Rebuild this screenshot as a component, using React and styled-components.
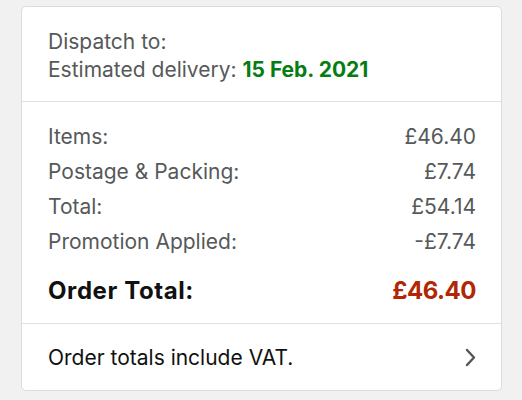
import React from "react"
import styled, { createGlobalStyle } from "styled-components"

const Global = createGlobalStyle`
  html, body {
    margin: 0;
    background: #f1f1f1;
  }
  body {
    font-family: Inter, Roboto, "Liberation Sans", sans-serif;
    -webkit-font-smoothing: antialiased;
  }
`

const Page = styled.div`
  padding: 6px 20px 9px 21px;
`

const Card = styled.div`
  background: #fff;
  border: 1px solid #dcdcdc;
  border-radius: 5px;
  overflow: hidden;
`

const Section = styled.div`
  padding: ${(p) => p.$pad};
  & + & {
    border-top: 1px solid #e0e0e0;
  }
`

const Line = styled.div`
  font-size: 21px;
  line-height: 28px;
  color: #565959;
`

const Date = styled.span`
  color: #067d12;
  font-weight: 700;
`

const Row = styled.div`
  display: flex;
  justify-content: space-between;
  align-items: center;
  font-size: ${(p) => (p.$big ? "24px" : "21px")};
  font-weight: ${(p) => (p.$big ? 700 : 400)};
  line-height: 35px;
  color: ${(p) => (p.$big ? "#111" : "#565959")};
  margin-top: ${(p) => (p.$big ? "14px" : "0")};
`

const Label = styled.span`
  letter-spacing: ${(p) => (p.$wide ? "0.6px" : "normal")};
`

const Price = styled.span`
  color: ${(p) => p.$color || "inherit"};
  letter-spacing: ${(p) => (p.$tight ? "-0.5px" : "normal")};
`

const LinkRow = styled.div`
  display: flex;
  justify-content: space-between;
  align-items: center;
  height: 66px;
  font-size: 21px;
  color: #111;
`

const rows = [
  ["Items:", "£46.40"],
  ["Postage & Packing:", "£7.74"],
  ["Total:", "£54.14"],
  ["Promotion Applied:", "-£7.74"],
]

export default function App() {
  return (
    <Page>
      <Global />
      <Card>
        <Section $pad="21px 25px 17px 26px">
          <Line>Dispatch to:</Line>
          <Line>
            Estimated delivery: <Date>15 Feb. 2021</Date>
          </Line>
        </Section>
        <Section $pad="17px 25px 15px 26px">
          {rows.map(([label, value]) => (
            <Row key={label}>
              <Label>{label}</Label>
              <Price>{value}</Price>
            </Row>
          ))}
          <Row $big>
            <Label $wide>Order Total:</Label>
            <Price $color="#b12704" $tight>£46.40</Price>
          </Row>
        </Section>
        <Section $pad="0 25px 0 26px">
          <LinkRow>
            <span>Order totals include VAT.</span>
            <svg width="11" height="19" viewBox="0 0 11 19">
              <polyline
                points="2,2 9,9.5 2,17"
                fill="none"
                stroke="#555"
                strokeWidth="2.4"
                strokeLinecap="round"
                strokeLinejoin="round"
              />
            </svg>
          </LinkRow>
        </Section>
      </Card>
    </Page>
  )
}
